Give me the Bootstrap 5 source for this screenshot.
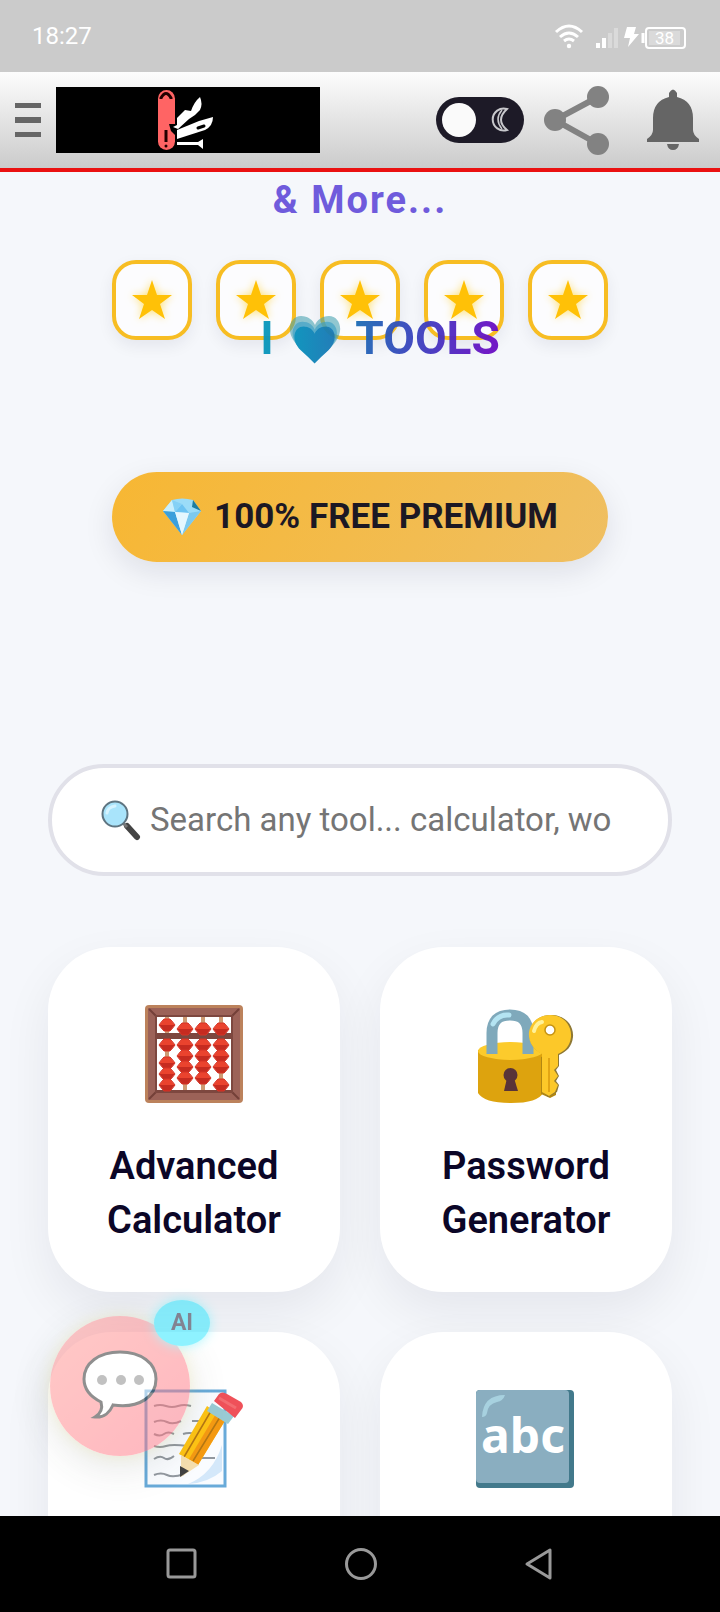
<!DOCTYPE html>
<html lang="en">
<head>
<meta charset="utf-8">
<meta name="viewport" content="width=device-width, initial-scale=1">
<title>I Love Tools</title>
<link href="https://cdn.jsdelivr.net/npm/bootstrap@5.3.0/dist/css/bootstrap.min.css" rel="stylesheet">
<style>
  body { font-family: Roboto, "Liberation Sans", sans-serif; background: #f5f7fb; }
  svg { display: block; flex: none; }
  button { border: 0; background: none; padding: 0; }
  .status-bar { height: 72px; padding: 0 34px 0 32px; background: #cbcbcb; color: #fff; font-size: 24px; }
  .site-header { height: 100px; padding: 0 20px 0 14px; background: linear-gradient(#fdfdfd, #cbcbcb); border-bottom: 4px solid #ea1111; }
  .brand { width: 264px; height: 66px; background: #000; margin-left: 14px; }
  .bell { margin-left: 32px; }
  .page-main { min-height: 0; }
  .more-line { font-size: 38px; line-height: 56px; font-weight: 700; letter-spacing: 2px; color: #6f5bdc; margin-bottom: 32px; }
  .stars { gap: 24px; }
  .star-box { width: 80px; height: 80px; border: 4px solid #f7bd23; border-radius: 24px; background: #fcfcfe; box-shadow: 0 6px 16px rgba(20,20,50,.07); }
  .star-box svg { filter: drop-shadow(0 0 4px rgba(255,214,60,.75)); }
  .love-line { position: relative; font-size: 46px; line-height: 56px; font-weight: 700; margin-top: -30px; padding-left: 40px; opacity: .95; }
  .love-text { background: linear-gradient(100deg, #0798bb 0%, #0d8cbb 25%, #1c6bb5 40%, #4238c0 70%, #6a0fc4 95%); -webkit-background-clip: text; background-clip: text; color: transparent; }
  .love-text svg { display: inline-block; vertical-align: -10px; margin: 0 3px; }
  .premium { height: 90px; margin-top: 106px; padding: 0 50px; border-radius: 48px; font-size: 35px; font-weight: 700; color: #1c1824; background: linear-gradient(120deg, #f7b733, #efbf62); box-shadow: 0 10px 30px rgba(20,20,50,.1); gap: 12px; }
  .content-pad { padding: 0 48px; }
  .search-box { height: 112px; margin-top: 202px; border: 4px solid #e1e1e9; border-radius: 56px; background: #fff; padding: 0 48px; gap: 8px; }
  .search-box input { border: 0; outline: 0; background: none; padding: 0; min-width: 0; font-size: 33px; color: #333; }
  .search-box input::placeholder { color: #757575; opacity: 1; }
  .tools { display: grid; grid-template-columns: 1fr 1fr; gap: 40px; margin-top: 71px; }
  .tool { height: 345px; padding: 57px 24px 0; border-radius: 64px; background: #fff; color: #0b0627; font-size: 38px; line-height: 54px; font-weight: 600; text-align: center; text-decoration: none; gap: 35px; box-shadow: 0 20px 50px rgba(20,20,40,.07); }
  .chat { position: absolute; left: 50px; bottom: 156px; width: 140px; height: 140px; border-radius: 50%; opacity: .5; background: linear-gradient(135deg, #ff9590, #ff7080); box-shadow: 0 10px 40px rgba(60,70,60,.28), 0 0 14px rgba(255,240,90,.4); }
  .chat-tag { position: absolute; top: -16px; right: -20px; width: 56px; height: 46px; border-radius: 50%; background: #1fe6ff; color: #191932; font-size: 23px; font-weight: 700; line-height: 46px; box-shadow: 0 0 12px #55efff; }
  .system-nav { height: 96px; background: #000; gap: 146px; }
</style>
</head>
<body>
<div class="vh-100 d-flex flex-column overflow-hidden">
  <div class="status-bar d-flex align-items-center justify-content-between flex-shrink-0">
    <span>18:27</span>
    <svg width="132" height="26" viewBox="0 0 132 26" fill="none" stroke="#fff" role="img" aria-label="Wi-Fi, signal, charging, battery 38 percent">
      <path d="M2 9Q15 -3 28 9M6 14Q15 6 24 14M10 18Q15 14 20 18" stroke-width="3"/>
      <circle cx="15" cy="23" r="2.2" fill="#fff" stroke="none"/>
      <path d="M44 25v-5M50 25V15" stroke-width="4"/><path d="M56 25V10M62 25V5" stroke="#dadada" stroke-width="4"/>
      <path d="M73 4h9l-2 7h5L74 24l2-9h-6z" fill="#fff" stroke="none"/>
      <path d="M89 10v10" stroke-width="3"/><rect x="92" y="5" width="39" height="20" rx="3" stroke-width="2"/>
      <rect x="95" y="8" width="31" height="14" fill="#dadada" stroke="none"/>
      <text x="101" y="21" font-family="Roboto" font-size="17" fill="#fff" stroke="none">38</text>
    </svg>
  </div>

  <header class="site-header d-flex align-items-center flex-shrink-0">
    <button type="button" aria-label="Menu"><svg width="28" height="36" viewBox="0 0 28 36" fill="#666"><path d="M1 1h26v5H1zM1 15h26v6H1zM1 30h26v5H1z"/></svg></button>
    <a href="#" class="brand" aria-label="Home">
      <svg width="264" height="66" viewBox="0 0 264 66">
        <rect x="102" y="3" width="17" height="60" rx="8.500" fill="#ff6464"/>
        <path d="M105 12v-1q5-9 10 0v1" fill="none" stroke="#200" stroke-width="3"/>
        <path d="M110 43v12" stroke="#200" stroke-width="3"/><circle cx="110" cy="59" r="1.500" fill="#200"/>
        <path d="M113 37h6v11l-4-4z" fill="#000"/>
        <path d="M117 40l4-2V31l8-8 6 1q3-9 9-14 3 7 0 13-5 6-11 9l-11 10z" fill="#fff"/>
        <path d="M121 43l22-9 14-4q0 9-8 13l-28 9z" fill="#fff"/><path d="M142 41l6-2" stroke="#000" stroke-width="3" stroke-linecap="round"/>
        <path d="M121 55h21l5-3v10l-5-4h-21z" fill="#fff"/>
      </svg>
    </a>
    <div class="d-flex align-items-center ms-auto">
      <button type="button" role="switch" aria-checked="false" aria-label="Dark mode"><svg width="88" height="46" viewBox="0 0 88 46"><rect width="88" height="46" rx="23" fill="#1d1a27"/><circle cx="23" cy="23" r="17" fill="#fafafa"/><path d="M71 12a11 11 0 1 0 0 21q-12-10 0-21z" fill="none" stroke="#c8c8cc" stroke-width="2"/><path d="M66 13q-8 9 0 19" fill="none" stroke="#c8c8cc" stroke-width="1.500"/></svg></button>
      <button type="button" class="ms-3" aria-label="Share"><svg width="74" height="70" viewBox="0 0 74 70" fill="#828282"><path d="M58 12L15 35l43 24" fill="none" stroke="#828282" stroke-width="6"/><circle cx="58" cy="12" r="11"/><circle cx="15" cy="35" r="11"/><circle cx="58" cy="59" r="11"/></svg></button>
      <button type="button" class="bell" aria-label="Notifications"><svg width="54" height="62" viewBox="0 0 54 62" fill="#656565"><path d="M23 8V4q4-7 8 0v4q16 4 16 21v12q0 5 6 9v3H1v-3q6-4 6-9V29Q7 12 23 8zM21 55h12q-1 6-6 6t-6-6z"/></svg></button>
    </div>
  </header>

  <main class="page-main flex-fill overflow-hidden">
    <h2 class="more-line text-center">&amp; More...</h2>

    <div class="stars d-flex justify-content-center" role="img" aria-label="Five stars">
      <svg width="0" height="0" class="position-absolute"><defs><path id="star" d="M20 0L25 15H40L28 24 33 39 20 30 7 39 12 24 0 15H15z" fill="#ffc107"/></defs></svg>
      <span class="star-box d-flex align-items-center justify-content-center"><svg width="40" height="40"><use href="#star"/></svg></span>
      <span class="star-box d-flex align-items-center justify-content-center"><svg width="40" height="40"><use href="#star"/></svg></span>
      <span class="star-box d-flex align-items-center justify-content-center"><svg width="40" height="40"><use href="#star"/></svg></span>
      <span class="star-box d-flex align-items-center justify-content-center"><svg width="40" height="40"><use href="#star"/></svg></span>
      <span class="star-box d-flex align-items-center justify-content-center"><svg width="40" height="40"><use href="#star"/></svg></span>
    </div>

    <div class="love-line text-center"><span class="love-text">I <svg width="54" height="50" viewBox="0 0 54 50" role="img" aria-label="love">
      <defs><linearGradient id="hg"><stop stop-color="#0790bb"/><stop offset="1" stop-color="#1878b5"/></linearGradient>
      <path id="heart" d="M27 48Q20 41 10 32C-4 18 2 2 13 2c7 0 12 4 14 9 2-5 7-9 14-9 11 0 17 16 3 30Q34 41 27 48z"/></defs>
      <use href="#heart" fill="#409eae" opacity=".6"/>
      <use href="#heart" fill="#3d9fc4" opacity=".75" transform="translate(3 6) scale(.88)"/>
      <use href="#heart" fill="url(#hg)" transform="translate(5 11) scale(.8)"/>
    </svg> TOOLS</span></div>

    <div class="d-flex justify-content-center">
      <div class="premium d-flex align-items-center">
        <svg width="40" height="38" viewBox="0 0 40 38"><path d="M10 2Q20-1 31 2l8 11-19 24L1 13z" fill="#9bdcf8"/><path d="M10 2L1 13l12 1zM20 37L13 14l14 1z" fill="#c8effd"/><path d="M1 13l12 1 7 23z" fill="#3b9fdb"/><path d="M39 13l-12 2-7 22z" fill="#7cc9ee"/><path d="M31 2l8 11-9-4z" fill="#1d7da0"/><path d="M13 14l7-8 7 9z" fill="#6cc3f2"/><path d="M10 2l10 4-7 8z" fill="#84d1f6"/><path d="M13 14l14 1-7 22z" fill="#e5f7fe"/></svg>
        <span>100% FREE PREMIUM</span>
      </div>
    </div>

    <div class="content-pad">
      <label class="search-box d-flex align-items-center">
        <svg width="42" height="42" viewBox="0 0 42 42"><path d="M27 27l10 11" stroke="#444" stroke-width="6" stroke-linecap="round"/><path d="M22 23l5 5" stroke="#777" stroke-width="3"/><circle cx="15" cy="15" r="12.500" fill="#a9e4fb" stroke="#5e7480" stroke-width="2"/><path d="M7 14q1-6 8-7" fill="none" stroke="#d4f3ff" stroke-width="3" stroke-linecap="round"/></svg>
        <input class="flex-fill" type="text" aria-label="Search tools" placeholder="Search any tool... calculator, wo">
      </label>

      <div class="tools">
        <a href="#" class="tool d-flex flex-column align-items-center">
          <svg width="100" height="100" viewBox="0 0 100 100">
            <defs><g id="bead"><path d="M-3-6h6l5 6H-8z" fill="#ea432e"/><path d="M-8 0H8L3 6h-6z" fill="#c62b20"/><path d="M-3-6h6Q6-3 8 0 6 3 3 6h-6Q-6 3-8 0-6-3-3-6z" fill="none" stroke="#d63426"/></g></defs>
            <rect x="1" y="1" width="98" height="98" rx="4" fill="#bc825c"/><rect x="4" y="4" width="92" height="92" fill="#9c6258"/>
            <path d="M5 5l7 7M95 5l-7 7M5 95l7-7M95 95l-7-7" stroke="#744038" stroke-width="2"/>
            <rect x="11" y="11" width="78" height="78" fill="#7d473f"/><path d="M13 13h74v16H13zM13 35h74v51H13z" fill="#fff"/>
            <path d="M23 13v16M41 13v16M59 13v16M77 13v16M23 35v51M41 35v51M59 35v51M77 35v51" stroke="#ce9b73" stroke-width="4"/>
            <use href="#bead" x="23" y="21"/><use href="#bead" x="41" y="25"/><use href="#bead" x="59" y="25"/><use href="#bead" x="77" y="25"/>
            <use href="#bead" x="23" y="41"/><use href="#bead" x="23" y="59"/><use href="#bead" x="23" y="70"/><use href="#bead" x="23" y="81"/>
            <use href="#bead" x="41" y="41"/><use href="#bead" x="41" y="52"/><use href="#bead" x="41" y="63"/><use href="#bead" x="41" y="74"/>
            <use href="#bead" x="59" y="41"/><use href="#bead" x="59" y="52"/><use href="#bead" x="59" y="63"/><use href="#bead" x="59" y="74"/>
            <use href="#bead" x="77" y="41"/><use href="#bead" x="77" y="52"/><use href="#bead" x="77" y="63"/><use href="#bead" x="77" y="81"/>
          </svg>
          <span>Advanced<br>Calculator</span>
        </a>
        <a href="#" class="tool d-flex flex-column align-items-center">
          <svg width="100" height="100" viewBox="1 0 100 100">
            <path d="M3 46v43q6 10 33 10t32-10V46z" fill="#dda30e"/><ellipse cx="35.500" cy="47" rx="32.500" ry="9" fill="#fccb2c"/>
            <path d="M17 50V29q0-18 18-18t18 18v21" fill="none" stroke="#7fa9bb" stroke-width="11"/><path d="M18 20q5-10 16-9" fill="none" stroke="#b4e4f2" stroke-width="5" stroke-linecap="round"/>
            <circle cx="35.500" cy="71" r="7" fill="#593438"/><path d="M32 74h7l4 13H29z" fill="#593438"/>
            <path d="M66 53v37l9 4 6-3V50z" fill="#b28712"/>
            <path d="M78 11c13 1 21 11 20 22-1 10-7 15-14 18v11l-3 4 3 6-3 5 3 4-2 7-9 5-5-5V50C58 46 53 37 55 27 57 16 67 10 78 11z" fill="#8e7834"/>
            <path d="M75 11c14 0 22 11 21 22-1 9-6 14-13 17v12l-4 4 4 6-4 5 4 4-3 7-6 4-7-4V50C58 46 53 37 54 28 56 17 65 11 75 11z" fill="#fcc829"/>
            <circle cx="75" cy="26" r="5" fill="#fff" stroke="#c59213" stroke-width="1.500"/><path d="M59 27q2-8 8-9" fill="none" stroke="#fff29a" stroke-width="4" stroke-linecap="round"/><path d="M74 54v34" stroke="#e2a514" stroke-width="2"/>
          </svg>
          <span>Password<br>Generator</span>
        </a>
        <a href="#" class="tool d-flex flex-column align-items-center" aria-label="Notepad">
          <svg width="100" height="100" viewBox="0 0 100 100">
            <path d="M2 2h79v95H2z" fill="#fafcff" stroke="#68aad9" stroke-width="3"/><path d="M78 56v26q-14 12-34 13 25-10 34-39z" fill="#d4e8fa"/>
            <path d="M10 17q6-2 12 0t12 0 13 0M10 33q7-3 13 0t14-1M48 32h13M10 45q6 3 10 0t10 0M39 45q6-2 13 0M10 57q6 2 12 0t22 0M10 70q6-4 10-1t10-2M58 69l13 0M10 86q7-3 13 0t17-1" fill="none" stroke="#92989f" stroke-width="2"/>
            <path d="M63 17l19 13-28 46-19-11z" fill="#ffc414"/><path d="M73 23l9 7-28 46-9-6z" fill="#f59a12"/><path d="M67 22L40 68M76 28L49 72" stroke="#b57713" stroke-width="1.500"/>
            <path d="M37 66l18 10-18 12z" fill="#f5dfaf"/><path d="M36 77l9 5-9 6z" fill="#424242"/>
            <path d="M68 14l22 13-6 8-21-13z" fill="#99cbd4"/><path d="M70 12l5-7q3-3 8 0l14 8q4 4 0 8l-6 8z" fill="#ef5159"/><path d="M75 9l17 10" stroke="#f36c70" stroke-width="3"/>
          </svg>
        </a>
        <a href="#" class="tool d-flex flex-column align-items-center">
          <svg width="100" height="100" viewBox="1 0 100 100"><rect x="1" y="1" width="98" height="98" rx="4" fill="#42798b"/><rect x="1" y="1" width="93" height="93" rx="4" fill="#8aaec0"/><path d="M7 28Q8 6 30 6q-2 6-8 7-9 2-10 11-1 4-5 4z" fill="#a7d1df"/><text x="48" y="64" text-anchor="middle" font-family="'Noto Sans',sans-serif" font-size="48" font-weight="700" fill="#fff">abc</text></svg>
        </a>
      </div>
    </div>
  </main>

  <div class="position-relative flex-shrink-0">
    <button type="button" class="chat" aria-label="Open AI chat">
      <svg class="mx-auto" width="76" height="72" viewBox="0 0 76 72"><path d="M38 2C17 2 2 13 2 29c0 10 7 18 17 23 2 7-1 12-6 15 9 1 15-5 18-12 27 4 43-9 43-26C74 13 59 2 38 2z" fill="#fff" stroke="#222" stroke-width="3"/><g fill="#858585"><circle cx="20" cy="30" r="5"/><circle cx="39" cy="30" r="5"/><circle cx="57" cy="30" r="5"/></g></svg>
      <span class="chat-tag">AI</span>
    </button>
    <nav class="system-nav d-flex align-items-center justify-content-center" aria-label="System">
      <button type="button" aria-label="Recent apps"><svg width="32" height="34" viewBox="0 0 32 34" fill="none" stroke="#999" stroke-width="3"><rect x="2" y="3" width="27" height="27" rx="2"/></svg></button>
      <button type="button" aria-label="Home screen"><svg width="34" height="34" viewBox="0 0 34 34" fill="none" stroke="#999" stroke-width="3"><circle cx="17" cy="17" r="14.500"/></svg></button>
      <button type="button" aria-label="Back"><svg width="30" height="34" viewBox="0 0 30 34" fill="none" stroke="#999" stroke-width="3" stroke-linejoin="round"><path d="M26 3v28L3 17z"/></svg></button>
    </nav>
  </div>
</div>
<script src="https://cdn.jsdelivr.net/npm/bootstrap@5.3.0/dist/js/bootstrap.bundle.min.js"></script>
</body>
</html>
